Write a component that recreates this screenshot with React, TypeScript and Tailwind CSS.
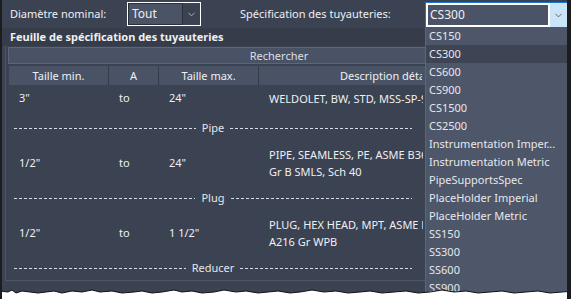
import { ChevronDown } from "lucide-react";

const specs = [
  "CS150",
  "CS300",
  "CS600",
  "CS900",
  "CS1500",
  "CS2500",
  "Instrumentation Imper...",
  "Instrumentation Metric",
  "PipeSupportsSpec",
  "PlaceHolder Imperial",
  "PlaceHolder Metric",
  "SS150",
  "SS300",
  "SS600",
  "SS900",
];

const Separator = ({ label }: { label: string }) => (
  <div className="h-[36px] w-[398px] ml-[6px] flex items-center gap-[6px] text-[#e4e6ea]">
    <div className="flex-1 h-[1px] bg-[repeating-linear-gradient(90deg,#d9dce2_0_3px,transparent_3px_5px)]" />
    <span>{label}</span>
    <div className="flex-1 h-[1px] bg-[repeating-linear-gradient(90deg,#d9dce2_0_3px,transparent_3px_5px)]" />
  </div>
);

const Row = ({ min, max, desc, h }: { min: string; max: string; desc: string[]; h: string }) => (
  <div className={`flex items-center ${h} text-[#eef0f3]`}>
    <div className="w-[110px] shrink-0 pl-[11px]">{min}</div>
    <div className="w-[50px] shrink-0 pl-[1px]">to</div>
    <div className="w-[100px] shrink-0 pl-[1px]">{max}</div>
    <div className="w-[155px] shrink-0 pl-[1px] leading-[17px] whitespace-nowrap overflow-hidden">
      {desc.map((d) => (
        <div key={d}>{d}</div>
      ))}
    </div>
  </div>
);

export default function App() {
  return (
    <div className="relative w-[571px] h-[299px] overflow-hidden bg-[#3b4252] border-l-2 border-r-[4px] border-[#1c1d20] font-['Noto_Sans',sans-serif] text-[11px] text-[#eef0f3]">
      {/* top filters */}
      <div className="h-[28px] flex items-center">
        <div className="w-[125px] pl-[8px]">Diamètre nominal:</div>
        <div className="w-[74px] h-[24px] flex border border-white bg-[#3b4252]">
          <div className="w-[55px] h-full bg-[#4b5467] border border-[#2a2f3a] pl-[3px] leading-[20px] text-[12px]">Tout</div>
          <div className="flex-1 flex items-center justify-center">
            <ChevronDown size={11} strokeWidth={1.5} className="text-[#d8dbe0]" />
          </div>
        </div>
        <div className="w-[224px] pl-[39px]">Spécification des tuyauteries:</div>
      </div>

      {/* section */}
      <div className="h-[18px] pl-[8px] font-bold bg-[#363c4a] leading-[18px]">
        Feuille de spécification des tuyauteries
      </div>
      <div className="ml-[3px] mr-[2px] h-[235px] overflow-hidden border-l border-b border-[#4f5666] pt-[1px] pl-[2px]">
        <div className="w-[542px] h-[17px] bg-[#4a5366] border border-[#5d6576] text-center leading-[15px] text-[#dcdfe4]">
          Rechercher
        </div>
        <div className="flex h-[19px] mt-[2px] ml-[1px] bg-[#4a5366] text-[#eef0f3] leading-[19px]">
          <div className="w-[100px] shrink-0 text-center border-r border-[#353b48]">Taille min.</div>
          <div className="w-[50px] shrink-0 text-center border-r border-[#353b48]">A</div>
          <div className="w-[100px] shrink-0 text-center border-r border-[#353b48]">Taille max.</div>
          <div className="w-[163px] shrink-0 pl-[81px] whitespace-nowrap overflow-hidden">Description détaillée</div>
          <div className="flex-1" />
        </div>
        <div className="mt-[1px]">
          <Row h="h-[24px]" min={'3"'} max={'24"'} desc={["WELDOLET, BW, STD, MSS-SP-97"]} />
          <Separator label="Pipe" />
          <Row h="h-[34px]" min={'1/2"'} max={'24"'} desc={["PIPE, SEAMLESS, PE, ASME B36.10", "Gr B SMLS, Sch 40"]} />
          <Separator label="Plug" />
          <Row h="h-[34px]" min={'1/2"'} max={'1 1/2"'} desc={["PLUG, HEX HEAD, MPT, ASME B16.11", "A216 Gr WPB"]} />
          <Separator label="Reducer" />
        </div>
      </div>

      {/* open combobox */}
      <div className="absolute left-[423px] top-[2px] w-[143px] h-[26px] border border-[#1b76d1] flex">
        <div className="flex-1 border-2 border-white bg-[#4b5467] pl-[2px] leading-[20px] text-[12px]">CS300</div>
        <div className="w-[17px] bg-[#cce4f7] flex items-center justify-center">
          <ChevronDown size={11} strokeWidth={1.5} className="text-[#333]" />
        </div>
      </div>
      <div className="absolute left-[423px] top-[27px] w-[143px] h-[272px] bg-[#4e5669] border-x border-[#1b76d1]">
        {specs.map((s) => (
          <div
            key={s}
            className={`h-[18px] pl-[3px] leading-[18px] whitespace-nowrap text-[#e6e8ec] ${
              s === "CS300" ? "bg-[#3e4454]" : ""
            }`}
          >
            {s}
          </div>
        ))}
      </div>

      {/* torn bottom edge */}
      <svg className="absolute left-0 bottom-0" width="571" height="12" viewBox="0 0 571 12">
        <polygon
          fill="#ffffff"
          stroke="#111111"
          strokeWidth="1"
          points="-2,13 -2,4 6,5 10,3 14,6 20,4 28,5 36,6 44,5 52,4 60,6 70,4 80,5 90,3 98,5 110,4 120,6 132,5 140,4 150,6 160,5 172,3 180,5 190,4 200,6 212,5 222,3 234,5 244,4 256,6 266,5 276,4 288,6 298,5 310,3 322,5 334,4 346,6 358,5 368,4 380,6 392,5 404,4 416,6 428,5 440,3 452,5 464,4 476,6 488,5 500,4 512,6 524,5 536,4 548,6 560,5 573,4 573,13"
        />
      </svg>
    </div>
  );
}
